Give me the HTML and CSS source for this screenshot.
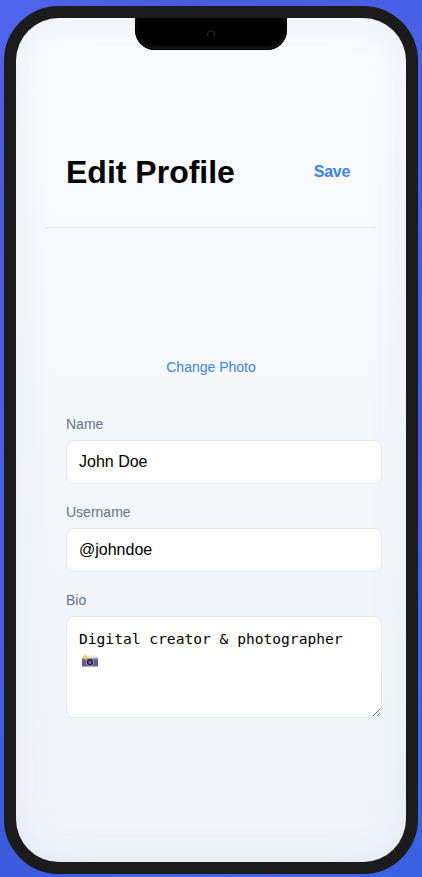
FILE: index.html
```html
<!DOCTYPE html>
<html lang="en">
<head>
<meta charset="utf-8">
<title>Edit Profile</title>
<link rel="stylesheet" href="styles.css">
</head>
<body>
<div class="phone">
  <div class="notch">
    <svg class="camera" width="8" height="8" viewBox="0 0 8 8" aria-hidden="true"><path d="M.7 6V4a3.3 3.3 0 0 1 6.6 0v2" fill="none" stroke="#303030"/></svg>
  </div>
  <main class="screen">
    <header class="header">
      <h1 class="title">Edit Profile</h1>
      <button class="save" type="button">Save</button>
    </header>
    <section class="photo">
      <button class="change-photo" type="button">Change Photo</button>
    </section>
    <form class="form">
      <div class="field">
        <label class="label" for="name">Name</label>
        <input class="input" id="name" type="text" value="John Doe">
      </div>
      <div class="field">
        <label class="label" for="username">Username</label>
        <input class="input" id="username" type="text" value="@johndoe">
      </div>
      <div class="field">
        <label class="label" for="bio">Bio</label>
        <textarea class="input bio" id="bio">Digital creator &amp; photographer</textarea>
        <svg class="camera-emoji" width="18" height="14" viewBox="0 0 18 14" aria-hidden="true">
          <path d="M6 3 8 1.5h7q1.5 0 1.5 1.500V5H6z" fill="#e4e4e4"/>
          <rect x="1" y="4.5" width="16" height="8" fill="#65589c"/>
          <path d="M1 4.500h16v1H1z" fill="#8a80b4"/>
          <circle cx="9" cy="8.300" r="4" fill="#aaa6ad"/>
          <circle cx="9" cy="8.300" r="3.200" fill="#292238"/>
          <circle cx="9" cy="8.300" r="1.600" fill="#75659a"/>
          <path d="M4.500 0 5.700 1.700 7.500 3 5.700 4.200 4.500 6 3.200 4.200 1.500 3 3.200 1.700z" fill="#fcd43c"/>
        </svg>
      </div>
    </form>
  </main>
</div>
</body>
</html>
```
FILE: styles.css
```css
* { box-sizing: border-box; }

body {
  margin: 0;
  height: 877px;
  padding: 6px 4px 3px;
  overflow: hidden;
  font-family: "Liberation Sans", Arial, sans-serif;
  background: linear-gradient(135deg, #5266f0 0%, #475bda 15%, #4861e8 35%, #3b5bdd 65%, #4063ea 85%, #3a61e2 100%);
}

.phone {
  position: relative;
  width: 414px;
  height: 868px;
  border: 12px solid #1b1b1b;
  border-radius: 55px;
  background: #1b1b1b;
}

.screen {
  height: 844px;
  padding: 98px 30px 0;
  border-radius: 43px;
  background: linear-gradient(180deg, #fafbfd, #f4f8fb 50%, #f0f4f8);
  box-shadow: inset 0 0 40px rgba(99, 102, 241, 0.09);
}

.notch {
  position: absolute;
  top: 0;
  left: 119px;
  width: 152px;
  height: 32px;
  border-radius: 0 0 20px 20px;
  background: #000;
  box-shadow: inset 0 0 0 1px #000, inset 0 -2px 4px rgba(255, 255, 255, 0.16);
}

.camera {
  position: absolute;
  top: 12px;
  left: 72px;
}

.header {
  display: flex;
  align-items: center;
  justify-content: space-between;
  height: 112px;
  padding: 0 26px 0 20px;
  border-bottom: 1px solid #e2e8f0;
}

.title {
  margin: 0;
  padding-top: 2px;
  font-size: 32px;
  line-height: 37px;
  color: #000;
}

.save,
.change-photo {
  padding: 0;
  border: 0;
  background: none;
  font-family: inherit;
  color: #3b82f6;
}

.save {
  font-size: 16px;
  font-weight: 700;
  letter-spacing: -0.3px;
}

.photo {
  display: flex;
  justify-content: center;
  padding-top: 131px;
}

.change-photo {
  font-size: 14px;
  line-height: 16px;
}

.form {
  display: flex;
  flex-direction: column;
  gap: 20px;
  padding: 41px 0 0 20px;
}

.field {
  position: relative;
  width: 316px;
}

.label {
  display: block;
  margin-bottom: 8px;
  font-size: 14px;
  line-height: 16px;
  color: #64748b;
}

.input {
  display: block;
  width: 316px;
  height: 44px;
  padding: 0 12px;
  border: 1px solid #e2e8f0;
  border-radius: 8px;
  outline: 0;
  background: #fff;
  font-family: inherit;
  font-size: 16px;
  color: #000;
}

.bio {
  height: 102px;
  padding: 12px;
  font-family: "DejaVu Sans Mono", monospace;
  font-size: 14.6px;
  line-height: 19px;
  resize: both;
}

.camera-emoji {
  position: absolute;
  top: 62px;
  left: 15px;
}
```
